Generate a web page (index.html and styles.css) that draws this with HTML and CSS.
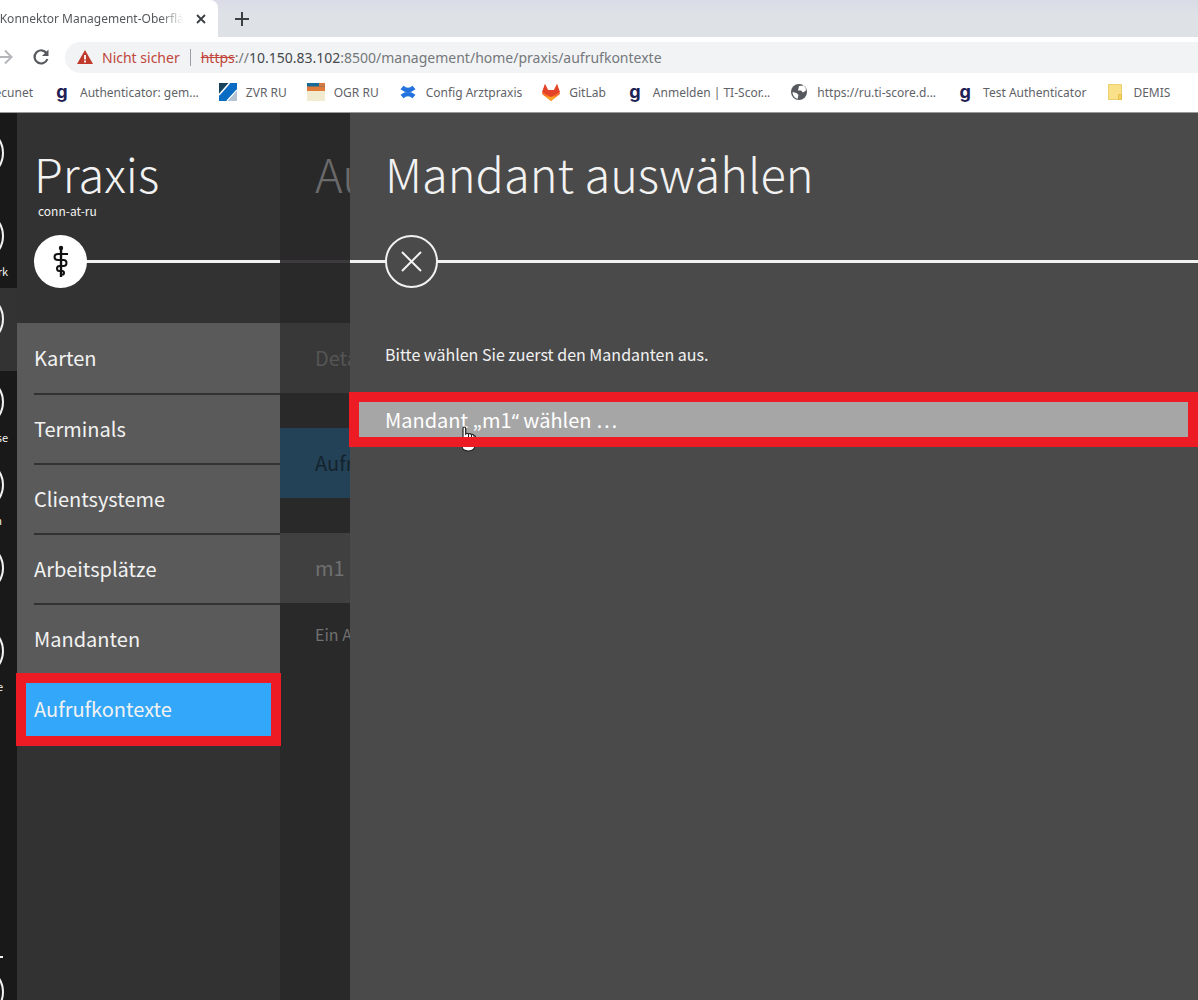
FILE: index.html
```html
<!DOCTYPE html>
<html lang="de">
<head>
<meta charset="utf-8">
<title>Konnektor Management-Oberfläche</title>
<link rel="stylesheet" href="styles.css">
</head>
<body>
<header class="browser">
  <div class="tabstrip">
    <div class="tab">
      <span class="tab-title">Konnektor Management-Oberflä</span>
      <button class="icon-button" aria-label="Tab schließen">
        <svg width="10" height="10" viewBox="0 0 10 10"><path d="M1 1l8 8M9 1l-8 8" stroke="#3c4043" stroke-width="1.9"/></svg>
      </button>
    </div>
    <button class="icon-button new-tab" aria-label="Neuer Tab">
      <svg width="14" height="14" viewBox="0 0 14 14"><path d="M7 0v14M0 7h14" stroke="#3c4043" stroke-width="2"/></svg>
    </button>
  </div>
  <div class="toolbar">
    <button class="icon-button forward" aria-label="Vorwärts">
      <svg width="18" height="16" viewBox="0 0 18 16"><path d="M0 8h16M10 1.500l6.500 6.500l-6.500 6.500" fill="none" stroke="#b4b6b9" stroke-width="2"/></svg>
    </button>
    <button class="icon-button reload" aria-label="Neu laden">
      <svg width="18" height="18" viewBox="0 0 18 18"><path d="M14.500 5A6.600 6.600 0 1 0 15.400 11" fill="none" stroke="#55585c" stroke-width="2.200"/><path d="M16.500 1.500v6.500h-6.500z" fill="#55585c"/></svg>
    </button>
    <div class="address">
      <svg width="16" height="14" viewBox="0 0 16 14"><path d="M8 0l8 14H0z" fill="#c0392b"/><path d="M8 5v4.500M8 10.500v2" stroke="#fff" stroke-width="1.800"/></svg>
      <span class="insecure">Nicht sicher</span>
      <span class="url"><s>https</s>://<b>10.150.83.102</b>:8500/management/home/praxis/aufrufkontexte</span>
    </div>
  </div>
  <nav class="bookmarks">
    <a class="bookmark first" href="#"><span>ecunet</span></a>
    <a class="bookmark" href="#"><i class="gematik">g</i><span>Authenticator: gem...</span></a>
    <a class="bookmark" href="#"><svg width="18" height="18" viewBox="0 0 18 18"><path d="M0 0h18v18H0z" fill="#0b6cc4"/><path d="M0 0h10L0 11z" fill="#17425a"/><path d="M18 8v10H9z" fill="#b5c3d2"/><path d="M10.500 0L0 12M18 7L8 18" stroke="#fff" stroke-width="1.500"/></svg><span>ZVR RU</span></a>
    <a class="bookmark" href="#"><svg width="18" height="18" viewBox="0 0 18 18"><path d="M0 0h18v18H0z" fill="#f1ecd0"/><path d="M0 0h18v8H0z" fill="#e07b39"/><path d="M0 0h18v3.500H0z" fill="#1a6a96"/><path d="M12 0h6v3.500h-6z" fill="#d4793f"/></svg><span>OGR RU</span></a>
    <a class="bookmark" href="#"><svg width="18" height="18" viewBox="0 0 18 18"><path d="M3 4.500Q9 9.500 15 4.500M3 13.500Q9 8.500 15 13.500" fill="none" stroke="#2472de" stroke-width="4.500"/></svg><span>Config Arztpraxis</span></a>
    <a class="bookmark" href="#"><svg width="18" height="18" viewBox="0 0 18 18"><path d="M3 1L6 7h6l3-6L18 11l-9 7l-9-7z" fill="#fc6d26"/><path d="M0 9L3 1l3 6h6l3-6l3 8l-9 5z" fill="#e24329"/><path d="M3 13l6 1l6-1l-6 5z" fill="#fca326"/></svg><span>GitLab</span></a>
    <a class="bookmark" href="#"><i class="gematik">g</i><span>Anmelden | TI-Scor...</span></a>
    <a class="bookmark" href="#"><svg width="18" height="18" viewBox="0 0 18 18"><circle cx="9" cy="9" r="8" fill="#55585c"/><path d="M2.500 9l4 1l2 2l-1 4q-5-2-5-7zM9 3l5-.5q2 2 2 5l-3 2l-2-2H8z" fill="#fff"/></svg><span>https://ru.ti-score.d...</span></a>
    <a class="bookmark" href="#"><i class="gematik">g</i><span>Test Authenticator</span></a>
    <a class="bookmark" href="#"><svg width="18" height="18" viewBox="0 0 18 18"><path d="M2.500 1.500h13v15h-13z" fill="#fbe08a" stroke="#ecd070"/><path d="M12.500 11.500h3v5h-3z" fill="#f5d35f" stroke="#e3bf49"/></svg><span>DEMIS</span></a>
  </nav>
</header>
<main class="app">
  <nav class="rail">
    <a class="rail-item" href="#"><i></i></a>
    <a class="rail-item" href="#"><i></i><span>rk</span></a>
    <a class="rail-item current" href="#"><i></i></a>
    <a class="rail-item" href="#"><i></i><span>se</span></a>
    <a class="rail-item" href="#"><i></i><span class="short">n</span></a>
    <a class="rail-item" href="#"><i></i></a>
    <a class="rail-item" href="#"><i></i><span class="mid">e</span></a>
    <div class="rail-end"><hr><i></i></div>
  </nav>
  <section class="panel praxis">
    <div class="head">
      <h1>Praxis</h1>
      <p class="host">conn-at-ru</p>
      <div class="track">
        <span class="badge">
          <svg width="18" height="34" viewBox="0 0 18 34"><path d="M9 3v29" stroke="#111" stroke-width="2.400"/><circle cx="9" cy="3" r="2.200" fill="#111"/><path d="M16 9H6Q2.500 9 2.500 12T6 15h5.500Q14.500 15 14.500 18T11.500 21H7.500Q5 21 5 23.500T7.500 26H10Q12 26 12 28T10 29.500" fill="none" stroke="#111" stroke-width="2"/></svg>
        </span>
      </div>
    </div>
    <ul class="menu">
      <li><a href="#">Karten</a></li>
      <li><a href="#">Terminals</a></li>
      <li><a href="#">Clientsysteme</a></li>
      <li><a href="#">Arbeitsplätze</a></li>
      <li><a href="#">Mandanten</a></li>
      <li class="selected marked"><a href="#">Aufrufkontexte</a></li>
    </ul>
  </section>
  <section class="panel behind">
    <div class="head">
      <h1>Auf</h1>
      <p class="host"></p>
      <div class="track"></div>
    </div>
    <div class="row">Details</div>
    <div class="row blue">Aufruf</div>
    <div class="row light">m1 ,</div>
    <p class="note">Ein Auf</p>
  </section>
  <section class="panel dialog">
    <div class="head">
      <h1>Mandant auswählen</h1>
      <p class="host"></p>
      <div class="track">
        <button class="badge close" aria-label="Schließen">
          <svg width="21" height="21" viewBox="0 0 21 21"><path d="M1 1l19 19M20 1L1 20" stroke="#f2f2f2" stroke-width="2"/></svg>
        </button>
      </div>
    </div>
    <p class="hint">Bitte wählen Sie zuerst den Mandanten aus.</p>
    <div class="choice-wrap marked">
      <button class="choice">Mandant „m1<span class="quote">“</span> wählen …</button>
      <svg class="pointer" width="16" height="26" viewBox="0 0 16 26"><path d="M2 13V2.500Q2 1 3.300 1T4.700 2.500V8Q6 6.500 7.500 8Q9 7 10.500 8.500Q12 8 13 9.500Q14.500 9.500 14.500 11V18Q14 25 7.500 25T1 20z" fill="#fff" stroke="#222" stroke-width="1.200"/><path d="M7.500 8v5M10.500 8.500v5M13 9.500v4" stroke="#222"/></svg>
    </div>
  </section>
</main>
</body>
</html>
```
FILE: styles.css
```css
* { box-sizing: border-box; }
body {
  margin: 0;
  min-height: 100vh;
  display: flex;
  flex-direction: column;
  background: #4a4a4a;
  color: #f2f2f2;
  font-family: "Noto Sans CJK SC", "Open Sans", sans-serif;
}
h1, p, ul { margin: 0; padding: 0; }
ul { list-style: none; }
a { color: inherit; text-decoration: none; }
button { font: inherit; color: inherit; border: 0; padding: 0; background: none; }
svg { display: block; flex: none; }

/* Browser window */
.browser {
  background: #fff;
  color: #5f6368;
  font-family: "Noto Sans", "Open Sans", sans-serif;
  border-bottom: 1px solid #9a9a9a;
}
.icon-button { display: flex; align-items: center; justify-content: center; flex: none; }
.tabstrip { display: flex; height: 37px; background: linear-gradient(#d9dce6, #dee1e6 14px); }
.tab {
  width: 218px;
  display: flex;
  align-items: center;
  justify-content: flex-end;
  gap: 12px;
  padding-right: 12px;
  background: #fff;
  border-radius: 0 8px 0 0;
  overflow: hidden;
  font-size: 12px;
  white-space: nowrap;
}
.tab-title {
  color: #55585c;
  -webkit-mask-image: linear-gradient(to left, transparent, #000 24px);
  mask-image: linear-gradient(to left, transparent, #000 24px);
}
.new-tab { width: 48px; }
.toolbar { display: flex; align-items: center; height: 39px; padding-top: 1px; }
.forward { width: 13px; justify-content: flex-end; }
.reload { width: 52px; padding-left: 3px; }
.address {
  flex: 1;
  display: flex;
  align-items: center;
  height: 31px;
  padding-left: 12px;
  border-radius: 16px 0 0 16px;
  background: #f1f3f4;
  font-size: 14px;
  white-space: nowrap;
}
.insecure { color: #c0463c; margin-left: 9px; padding-right: 10px; border-right: 1px solid #9aa0a6; line-height: 17px; }
.url { margin-left: 10px; color: #75787c; }
.url b { font-weight: 400; color: #45484c; }
.url s { color: #c0463c; }
.bookmarks { display: flex; align-items: center; gap: 20px; height: 36px; padding-bottom: 4px; overflow: hidden; }
.bookmark { display: flex; align-items: center; gap: 9px; font-size: 12px; white-space: nowrap; flex: none; }
.first { width: 33px; justify-content: flex-end; }
.gematik { width: 18px; text-align: center; font: 700 18px/18px Inter, sans-serif; color: #1f2154; }

/* Application */
.app { flex: 1; display: flex; }
.rail { position: relative; width: 17px; background: #191919; padding-top: 9px; overflow: hidden; flex: none; }
.rail-item { display: flex; flex-direction: column; align-items: flex-end; justify-content: space-between; height: 83px; padding: 5px 9px 9px 0; font-size: 11px; line-height: 16px; }
.rail-item.current { background: #333; }
.rail i { width: 52px; height: 52px; border: 2px solid #f2f2f2; border-radius: 50%; margin-right: 4px; flex: none; }
.rail .short { padding-right: 6px; }
.rail .mid { padding-right: 5px; }
.rail-end { position: absolute; right: 9px; bottom: -18px; }
.rail-end hr { width: 12px; margin: 0 5px 8px auto; border: 0; border-top: 2px solid #f2f2f2; }
.rail-end i { display: block; }

.panel { --pad: 35px; }
.head { height: 210px; padding-top: 34px; overflow: hidden; }
.head h1 { padding-left: var(--pad); font-size: 47px; line-height: 52px; font-weight: 300; white-space: nowrap; }
.host { height: 16px; margin-top: 4px; padding-left: 38px; font-size: 12px; line-height: 16px; }
.track {
  display: flex;
  height: 54px;
  margin-top: 16px;
  padding-left: var(--pad);
  background: linear-gradient(#f2f2f2, #f2f2f2) 0 25px / 100% 3px no-repeat;
}
.badge { display: flex; align-items: center; justify-content: center; width: 53px; height: 53px; border-radius: 50%; background: #fff; }
.close { background: #4a4a4a; border: 2px solid #f2f2f2; }

.praxis { width: 263px; flex: none; background: #323232; --pad: 17px; }
.praxis .host { padding-left: 21px; }
.praxis .track { background-position: 17px 25px; }
.menu { background: #5a5a5a; font-size: 20px; }
.menu li { position: relative; height: 70px; padding-left: 17px; }
.menu a { display: block; height: 70px; line-height: 70px; }
.menu li + li a { border-top: 2px solid #323232; line-height: 67px; }
.menu .selected { background: #33a7f9; }

.marked { position: relative; }
.marked::after { content: ""; position: absolute; inset: 0 -1px -3px -1px; border: 10px solid #ed1c24; pointer-events: none; }

.behind { width: 70px; flex: none; background: #292929; color: #6a6a6a; overflow: hidden; white-space: nowrap; font-size: 20px; }
.behind .track { background-image: linear-gradient(#3c3a3c, #3c3a3c); }
.row { height: 70px; line-height: 70px; padding-left: var(--pad); background: #383838; color: #555; }
.row + .row { margin-top: 35px; }
.row.blue { background: #234257; color: #14232e; }
.row.light { background: #404040; color: #707070; }
.note { padding: 19px 0 0 35px; font-size: 16px; line-height: 24px; color: #707070; }

.dialog { flex: 1; min-width: 0; background: #4a4a4a; }
.hint { padding: 19px 35px 0; font-size: 16px; line-height: 24px; }
.choice-wrap { margin-top: 27px; }
.choice { display: block; width: 100%; height: 53px; padding: 0 35px; text-align: left; font-size: 20px; line-height: 53px; background: #a6a6a6; color: #fff; }
.quote { font-family: "Noto Sans", sans-serif; }
.choice-wrap.marked::after { inset: -1px 0 -1px -1px; }
.pointer { position: absolute; left: 111px; top: 33px; }
```
